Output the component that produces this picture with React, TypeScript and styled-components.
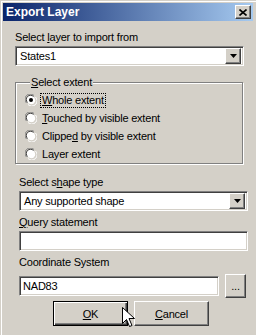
import styled, { createGlobalStyle } from "styled-components";

const GlobalStyle = createGlobalStyle`
  html, body {
    margin: 0;
    padding: 0;
    background: #d4d0c8;
  }
  body {
    font-family: "Liberation Sans", Arial, sans-serif;
    font-size: 11px;
    letter-spacing: -0.2px;
    color: #000;
  }
`;

const sunken = `
  border-style: solid;
  border-width: 1px;
  border-color: #808080 #ffffff #ffffff #808080;
  box-shadow: inset 1px 1px 0 #404040, inset -1px -1px 0 #d4d0c8;
`;

const raised = `
  border-style: solid;
  border-width: 1px;
  border-color: #ffffff #404040 #404040 #ffffff;
  box-shadow: inset -1px -1px 0 #808080;
  background: #d4d0c8;
`;

const Window = styled.div`
  position: relative;
  width: 256px;
  height: 335px;
  box-sizing: border-box;
  padding: 3px;
  background: #d4d0c8;
  box-shadow: inset 1px 1px 0 #d4d0c8, inset 2px 2px 0 #ffffff;
  overflow: hidden;
`;

const TitleBar = styled.div`
  height: 18px;
  display: flex;
  align-items: center;
  justify-content: space-between;
  padding: 0 2px 0 3px;
  background: linear-gradient(to right, #0a246a, #a6caf0);
`;

const TitleText = styled.span`
  color: #fff;
  font-weight: bold;
  font-size: 12px;
  letter-spacing: 0;
`;

const CloseButton = styled.div`
  ${raised}
  width: 16px;
  height: 14px;
  box-sizing: border-box;
  display: flex;
  align-items: center;
  justify-content: center;
`;

const Section = styled.div<{ $indent: number }>`
  margin-left: ${(p) => p.$indent}px;
  width: 229px;
  display: flex;
  flex-direction: column;
`;

const Label = styled.div<{ $top: number }>`
  margin-top: ${(p) => p.$top}px;
  line-height: 13px;
  height: 13px;
  white-space: nowrap;
`;

const Combo = styled.div<{ $top: number }>`
  ${sunken}
  margin-top: ${(p) => p.$top}px;
  height: 20px;
  box-sizing: border-box;
  background: #fff;
  display: flex;
  align-items: center;
  padding: 2px 2px 2px 4px;
`;

const ComboText = styled.span`
  flex: 1;
  line-height: 13px;
`;

const ArrowButton = styled.div`
  ${raised}
  width: 16px;
  height: 16px;
  box-sizing: border-box;
  display: flex;
  align-items: center;
  justify-content: center;
`;

const TextBox = styled.div<{ $top?: number; $width?: number }>`
  ${sunken}
  margin-top: ${(p) => p.$top ?? 0}px;
  width: ${(p) => (p.$width ? `${p.$width}px` : "auto")};
  height: 20px;
  box-sizing: border-box;
  background: #fff;
  padding: 3px 3px 0;
  line-height: 13px;
`;

const Group = styled.fieldset`
  margin: 10px 0 0;
  padding: 2px 0 0 9px;
  width: 228px;
  box-sizing: border-box;
  border: 1px solid #808080;
  box-shadow: 1px 1px 0 #fff, inset 1px 1px 0 #fff;
  min-width: 0;
`;

const Legend = styled.legend`
  padding: 0 1px;
  margin-left: 5px;
  line-height: 13px;
  background: #d4d0c8;
`;

const RadioRow = styled.div`
  height: 18px;
  display: flex;
  align-items: center;
  gap: 3px;
`;

const RadioText = styled.span<{ $focus?: boolean }>`
  line-height: 13px;
  padding: 0 1px;
  border: 1px dotted ${(p) => (p.$focus ? "#000" : "transparent")};
`;

const CoordRow = styled.div`
  margin-top: 4px;
  display: flex;
  align-items: center;
  gap: 6px;
  height: 25px;
`;

const SmallButton = styled.div`
  ${raised}
  width: 21px;
  height: 24px;
  box-sizing: border-box;
  display: flex;
  align-items: center;
  justify-content: center;
  font-size: 11px;
`;

const ButtonRow = styled.div`
  margin: 3px 0 0 50px;
  display: flex;
  gap: 6px;
`;

const PushButton = styled.div<{ $default?: boolean }>`
  width: 75px;
  height: 25px;
  box-sizing: border-box;
  display: flex;
  align-items: center;
  justify-content: center;
  background: #d4d0c8;
  ${(p) =>
    p.$default
      ? `border: 1px solid #000;
         box-shadow: inset 1px 1px 0 #fff, inset -1px -1px 0 #404040, inset -2px -2px 0 #808080;`
      : `border-style: solid;
         border-width: 1px;
         border-color: #ffffff #404040 #404040 #ffffff;
         box-shadow: inset -1px -1px 0 #808080;`}
`;

const Cursor = styled.svg`
  position: absolute;
  left: 122px;
  top: 307px;
`;

const Radio = ({ checked }: { checked?: boolean }) => (
  <svg width="12" height="12" viewBox="0 0 12 12">
    <path d="M1.5 9 A5 5 0 0 1 9 1.5" stroke="#808080" strokeWidth="1" fill="none" />
    <path d="M10.5 3 A5 5 0 0 1 3 10.5" stroke="#fff" strokeWidth="1" fill="none" />
    <circle cx="6" cy="6" r="4.5" fill="#fff" />
    <path d="M2.5 8.5 A4 4 0 0 1 8.5 2.5" stroke="#404040" strokeWidth="1" fill="none" />
    <path d="M9.5 3.5 A4 4 0 0 1 3.5 9.5" stroke="#d4d0c8" strokeWidth="1" fill="none" />
    {checked && <circle cx="6" cy="6" r="2" fill="#000" />}
  </svg>
);

const DownArrow = () => (
  <svg width="7" height="4" viewBox="0 0 7 4">
    <path d="M0 0h7L3.5 4z" fill="#000" />
  </svg>
);

export default function App() {
  return (
    <>
      <GlobalStyle />
      <Window>
        <TitleBar>
          <TitleText>Export Layer</TitleText>
          <CloseButton>
            <svg width="8" height="7" viewBox="0 0 8 7">
              <path d="M0.5 0.5l7 6M7.5 0.5l-7 6" stroke="#000" strokeWidth="1.6" />
            </svg>
          </CloseButton>
        </TitleBar>

        <Section $indent={12}>
          <Label $top={10}>
            Select <u>l</u>ayer to import from
          </Label>
          <Combo $top={2}>
            <ComboText>States1</ComboText>
            <ArrowButton>
              <DownArrow />
            </ArrowButton>
          </Combo>
          <Group>
            <Legend>
              <u>S</u>elect extent
            </Legend>
            <RadioRow>
              <Radio checked />
              <RadioText $focus>
                <u>W</u>hole extent
              </RadioText>
            </RadioRow>
            <RadioRow>
              <Radio />
              <RadioText>
                <u>T</u>ouched by visible extent
              </RadioText>
            </RadioRow>
            <RadioRow>
              <Radio />
              <RadioText>
                Clippe<u>d</u> by visible extent
              </RadioText>
            </RadioRow>
            <RadioRow>
              <Radio />
              <RadioText>Layer extent</RadioText>
            </RadioRow>
          </Group>
        </Section>

        <Section $indent={16}>
          <Label $top={12}>
            Select s<u>h</u>ape type
          </Label>
          <Combo $top={2}>
            <ComboText>Any supported shape</ComboText>
            <ArrowButton>
              <DownArrow />
            </ArrowButton>
          </Combo>
          <Label $top={5}>
            <u>Q</u>uery statement
          </Label>
          <TextBox $top={2} />
          <Label $top={5}>Coordinate System</Label>
          <CoordRow>
            <TextBox $width={200}>NAD83</TextBox>
            <SmallButton>...</SmallButton>
          </CoordRow>
        </Section>

        <ButtonRow>
          <PushButton $default>
            <u>O</u>K
          </PushButton>
          <PushButton>
            <u>C</u>ancel
          </PushButton>
        </ButtonRow>

        <Cursor width="13" height="21" viewBox="0 0 13 21">
          <path
            d="M0.5 0.5v16l4-4 3 7 2.5-1-3-7h5.5z"
            fill="#fff"
            stroke="#000"
            strokeWidth="1"
            strokeLinejoin="miter"
          />
        </Cursor>
      </Window>
    </>
  );
}
